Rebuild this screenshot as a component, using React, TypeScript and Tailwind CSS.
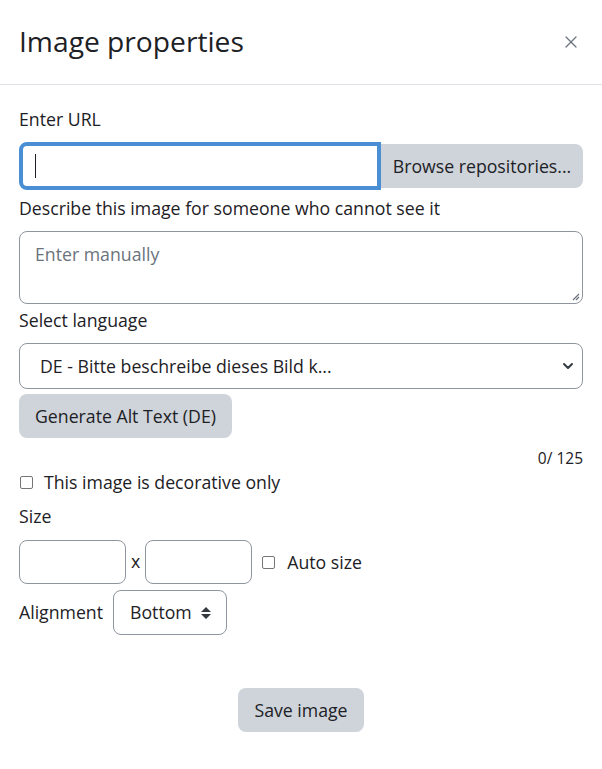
import { X } from "lucide-react";

const field = "border border-[#8f959e] rounded-[8px] bg-white";

const App: React.FC = () => {
  return (
    <div className="w-[602px] h-[769px] bg-white text-[#1d2125] text-[17.7px] font-['Segoe_UI','Open_Sans',sans-serif] flex flex-col">
      {/* Header */}
      <div className="h-[85px] flex items-center justify-between px-[19px] border-b border-[#dee2e6]">
        <h1 className="text-[28.2px] leading-none pb-[1px]">Image properties</h1>
        <X className="w-[20px] h-[20px] text-[#6a737b] mr-[2px]" strokeWidth={1.5} />
      </div>

      <div className="px-[19px] flex flex-col">
        <label className="mt-[23px] leading-[22px]">Enter URL</label>

        <div className="mt-[12px] flex h-[48px]">
          <div className="flex-1 rounded-l-[8px] border-[4px] border-[#4a8ed4] flex items-center pl-[12px]">
            <div className="w-[1px] h-[24px] bg-[#1d2125]" />
          </div>
          <button className="w-[202px] bg-[#ced4da] rounded-r-[8px] my-[2px]">Browse repositories...</button>
        </div>

        <label className="mt-[7px] leading-[22px]">Describe this image for someone who cannot see it</label>

        <div className={`mt-[12px] h-[73px] relative ${field} px-[15px] pt-[9px] text-[#6a737b]`}>
          Enter manually
          <svg className="absolute right-[2px] bottom-[2px]" width="9" height="9" viewBox="0 0 9 9">
            <path d="M8 2 L2 8 M8 5 L5 8" stroke="#6a737b" strokeWidth="1.2" />
          </svg>
        </div>

        <label className="mt-[5px] leading-[22px]">Select language</label>

        <div className={`mt-[12px] h-[46px] ${field} flex items-center justify-between pl-[20px] pr-[6px]`}>
          <span>DE - Bitte beschreibe dieses Bild k...</span>
          <svg width="16" height="16" viewBox="0 0 16 16">
            <path d="M4 6 L8 10 L12 6" fill="none" stroke="#343a40" strokeWidth="2" strokeLinecap="round" strokeLinejoin="round" />
          </svg>
        </div>

        <div className="mt-[5px]">
          <button className="h-[44px] px-[16px] bg-[#ced4da] rounded-[8px]">Generate Alt Text (DE)</button>
        </div>

        <div className="mt-[10px] text-right text-[15.5px] leading-[20px]">0/ 125</div>

        <label className="mt-[3px] flex items-center gap-[11px] leading-[22px]">
          <span className="w-[13px] h-[13px] border border-[#767676] rounded-[2px] ml-[1px]" />
          This image is decorative only
        </label>

        <label className="mt-[12px] leading-[22px]">Size</label>

        <div className="mt-[13px] flex items-center">
          <div className={`w-[107px] h-[44px] ${field}`} />
          <span className="mx-[5px] pb-[2px]">x</span>
          <div className={`w-[107px] h-[44px] ${field}`} />
          <span className="ml-[10px] w-[13px] h-[13px] border border-[#767676] rounded-[2px]" />
          <span className="ml-[12px]">Auto size</span>
        </div>

        <div className="mt-[6px] flex items-center">
          <span className="mr-[10px]">Alignment</span>
          <div className={`w-[114px] h-[45px] ${field} flex items-center pl-[16px] gap-[8px]`}>
            <span>Bottom</span>
            <svg width="12" height="14" viewBox="0 0 12 14">
              <path d="M6 1 L11 6 H1 Z M6 13 L11 8 H1 Z" fill="#343a40" />
            </svg>
          </div>
        </div>

        <div className="mt-[53px] flex justify-center">
          <button className="h-[44px] px-[16px] bg-[#ced4da] rounded-[8px]">Save image</button>
        </div>
      </div>
    </div>
  );
};

export default App;
